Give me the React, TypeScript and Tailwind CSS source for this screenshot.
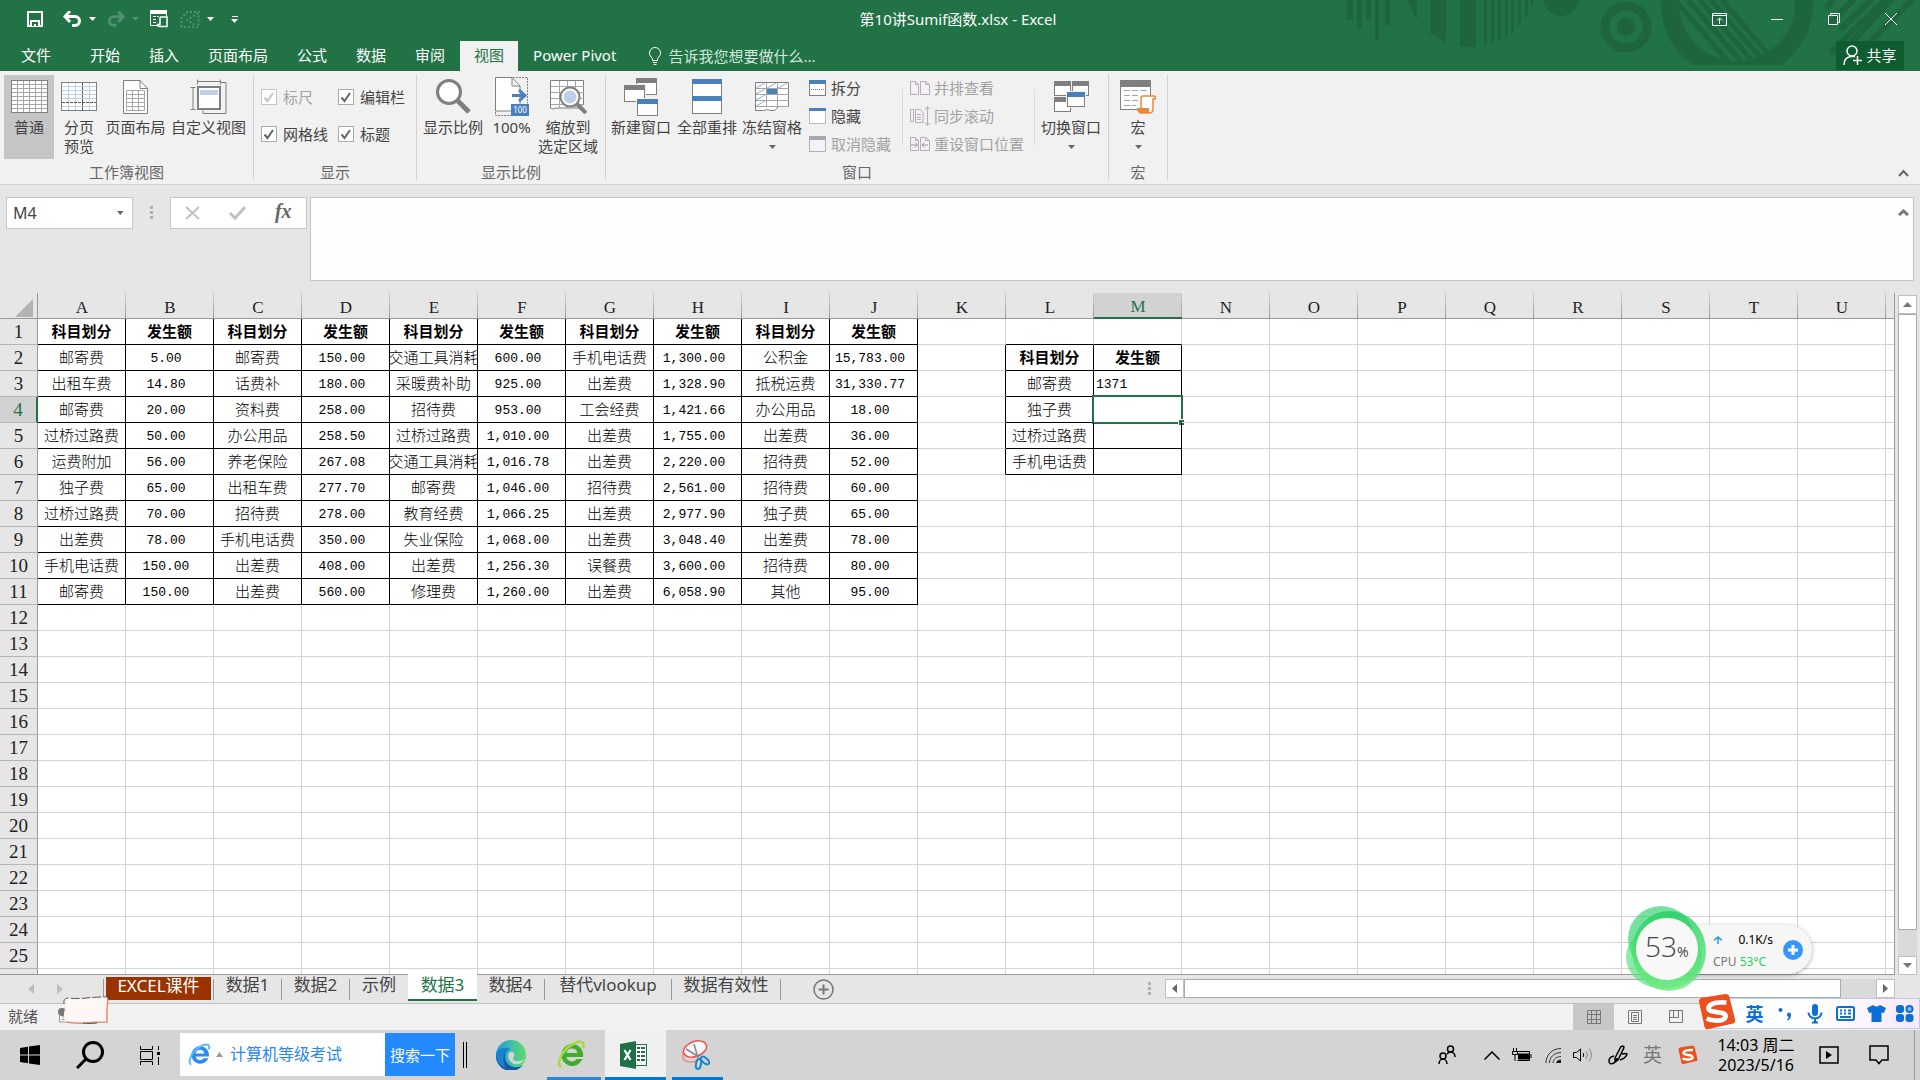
import { useState, type ReactNode } from 'react';

const GRAY = '#7f7f7f';
const BLUE = '#4a81bc';

/* ---------- sheet data ---------- */

const sheetRows: string[][] = [
  ['科目划分', '发生额', '科目划分', '发生额', '科目划分', '发生额', '科目划分', '发生额', '科目划分', '发生额'],
  ['邮寄费', '5.00', '邮寄费', '150.00', '交通工具消耗', '600.00', '手机电话费', '1,300.00', '公积金', '15,783.00'],
  ['出租车费', '14.80', '话费补', '180.00', '采暖费补助', '925.00', '出差费', '1,328.90', '抵税运费', '31,330.77'],
  ['邮寄费', '20.00', '资料费', '258.00', '招待费', '953.00', '工会经费', '1,421.66', '办公用品', '18.00'],
  ['过桥过路费', '50.00', '办公用品', '258.50', '过桥过路费', '1,010.00', '出差费', '1,755.00', '出差费', '36.00'],
  ['运费附加', '56.00', '养老保险', '267.08', '交通工具消耗', '1,016.78', '出差费', '2,220.00', '招待费', '52.00'],
  ['独子费', '65.00', '出租车费', '277.70', '邮寄费', '1,046.00', '招待费', '2,561.00', '招待费', '60.00'],
  ['过桥过路费', '70.00', '招待费', '278.00', '教育经费', '1,066.25', '出差费', '2,977.90', '独子费', '65.00'],
  ['出差费', '78.00', '手机电话费', '350.00', '失业保险', '1,068.00', '出差费', '3,048.40', '出差费', '78.00'],
  ['手机电话费', '150.00', '出差费', '408.00', '出差费', '1,256.30', '误餐费', '3,600.00', '招待费', '80.00'],
  ['邮寄费', '150.00', '出差费', '560.00', '修理费', '1,260.00', '出差费', '6,058.90', '其他', '95.00'],
];

const summary: Record<number, [string, string]> = {
  2: ['科目划分', '发生额'],
  3: ['邮寄费', '1371'],
  4: ['独子费', ''],
  5: ['过桥过路费', ''],
  6: ['手机电话费', ''],
};

const columns = 'ABCDEFGHIJKLMNOPQRSTU'.split('').concat('');
const rowNumbers = Array.from({ length: 26 }, (_, i) => i + 1);

function cellText(row: number, col: number) {
  if (col < 10) return sheetRows[row - 1]?.[col] ?? '';
  if (col === 11) return summary[row]?.[0] ?? '';
  if (col === 12) return summary[row]?.[1] ?? '';
  return '';
}

function cellBorder(row: number, col: number) {
  const inMain = row <= 11 && col <= 9;
  const inSummary = row >= 2 && row <= 6 && (col === 11 || col === 12);
  const right = inMain || inSummary || (row >= 2 && row <= 6 && col === 10);
  const bottom = inMain || inSummary || (row === 1 && (col === 11 || col === 12));
  return `${right ? 'border-r-black' : 'border-r-[#d4d4d4]'} ${bottom ? 'border-b-black' : 'border-b-[#d4d4d4]'}`;
}

/* ---------- small pieces ---------- */

function Caret({ color = '#666' }: { color?: string }) {
  return (
    <svg width="7" height="4" viewBox="0 0 7 4">
      <path d="M0 0h7L3.500 4z" fill={color} />
    </svg>
  );
}

function BigButton({ icon, lines, width, active, caret }: {
  icon: ReactNode;
  lines: string[];
  width: string;
  active?: boolean;
  caret?: boolean;
}) {
  return (
    <button className={`flex h-[84px] shrink-0 flex-col items-center whitespace-nowrap ${width} ${active ? 'bg-[#c5c5c5]' : ''}`}>
      <span className="flex h-[43px] items-center justify-center">{icon}</span>
      {lines.map((line) => (
        <span key={line} className="leading-[19px]">{line}</span>
      ))}
      {caret && <span className="flex h-[19px] items-center"><Caret /></span>}
    </button>
  );
}

function SmallButton({ icon, label, disabled }: { icon: ReactNode; label: string; disabled?: boolean }) {
  return (
    <button disabled={disabled} className="flex h-7 items-center gap-1 whitespace-nowrap pb-[2px] disabled:text-[#a3a3a3]">
      {icon}
      {label}
    </button>
  );
}

function Group({ label, width, children }: { label: string; width: string; children: ReactNode }) {
  return (
    <div className={`my-1 flex shrink-0 flex-col border-r border-[#d2d2d2] ${width}`}>
      <div className="flex flex-1">{children}</div>
      <div className="text-center leading-4 text-[#666]">{label}</div>
    </div>
  );
}

function CheckOption({ label, disabled }: { label: string; disabled?: boolean }) {
  return (
    <label className={`relative flex h-[37px] items-center gap-[6px] whitespace-nowrap ${disabled ? 'text-[#a3a3a3]' : ''}`}>
      <input
        type="checkbox"
        defaultChecked
        disabled={disabled}
        className="h-4 w-4 appearance-none border border-[#ababab] bg-white disabled:border-[#c6c6c6]"
      />
      <svg className="pointer-events-none absolute left-0" width="16" height="16" viewBox="0 0 16 16">
        <path d="M3.500 8.500l3 3.500 5.500-8" fill="none" stroke={disabled ? '#c6c6c6' : '#666'} strokeWidth="2" />
      </svg>
      {label}
    </label>
  );
}

/* ---------- ribbon icons ---------- */

function NormalIcon() {
  return (
    <svg width="37" height="33" viewBox="0 0 37 33">
      <rect x=".5" y=".5" width="36" height="32" fill="#fff" stroke={GRAY} />
      <path d="M6.500 1v31M12.500 1v31M18.500 1v31M24.500 1v31M30.500 1v31M1 4.500h35M1 8.500h35M1 12.500h35M1 16.500h35M1 20.500h35M1 24.500h35M1 28.500h35" stroke="#a6a6a6" />
    </svg>
  );
}

function PageBreakIcon() {
  return (
    <svg width="36" height="29" viewBox="0 0 36 29">
      <rect x=".5" y=".5" width="35" height="28" fill="#fff" stroke={GRAY} />
      <path d="M7.500 1v27M14.500 1v27M28.500 1v27M1 4.500h34M1 8.500h34M1 12.500h34M1 16.500h34M1 24.500h34" stroke="#bdd0e9" />
      <path d="M21.500 1v27M1 20.500h34" stroke="#555" strokeDasharray="3 1" />
    </svg>
  );
}

function PageLayoutIcon() {
  return (
    <svg width="25" height="34" viewBox="0 0 25 34">
      <path d="M.5.500H17l7.500 8v25H.5z" fill="#fff" stroke={GRAY} />
      <path d="M17 .5v8h7.500" fill="none" stroke={GRAY} />
      <path d="M3.500 10.500h18v20h-18zM9.500 10.500v20M15.500 10.500v20M3.500 14.500h18M3.500 18.500h18M3.500 22.500h18M3.500 26.500h18" fill="none" stroke="#a6a6a6" />
    </svg>
  );
}

function CustomViewIcon() {
  return (
    <svg width="37" height="36" viewBox="0 0 37 36">
      <path d="M30 3.500h6v31H13v-3M7.500.5v5M30.500.5v5M7.500 2.500h23M.5 8.500h5M3 8.500v22M.5 30.500h5" fill="none" stroke={GRAY} />
      <rect x="8" y="8" width="22" height="22" fill="#fff" stroke={GRAY} strokeWidth="2" />
      <rect x="10" y="11" width="18" height="5" fill="#bdd0e9" />
    </svg>
  );
}

function ZoomIcon() {
  return (
    <svg width="35" height="35" viewBox="0 0 35 35">
      <circle cx="13" cy="13" r="11.500" fill="#fff" stroke={GRAY} strokeWidth="3" />
      <path d="M21 21l12 12" stroke={GRAY} strokeWidth="5" />
    </svg>
  );
}

function Zoom100Icon() {
  return (
    <svg width="34" height="39" viewBox="0 0 34 39">
      <path d="M18 .5h14.500v26M.5 35v3.500H16" fill="none" stroke={GRAY} strokeDasharray="2 1" />
      <path d="M.5.500H17l8 8.500v25H.5z" fill="#fff" stroke={GRAY} />
      <path d="M17 .5V9h8" fill="none" stroke={GRAY} />
      <path d="M17 18.500h12M24 13l6 5.500-6 5.500" fill="none" stroke={BLUE} strokeWidth="3" />
      <rect x="16" y="27" width="18" height="12" fill={BLUE} />
      <text x="25" y="36" fontSize="8" textAnchor="middle" fill="#fff" fontFamily="Noto Sans, sans-serif">100</text>
    </svg>
  );
}

function ZoomSelectionIcon() {
  return (
    <svg width="37" height="34" viewBox="0 0 37 34">
      <path d="M.5.500h33v24L30 28H6l-3 1-2.500-1z" fill="#fff" stroke={GRAY} />
      <path d="M9.500 1v27M17.500 1v27M25.500 1v27M1 6.500h33M1 12.500h33M1 18.500h33M1 24.500h33" stroke="#a6a6a6" />
      <path d="M27 24l9 9" stroke={GRAY} strokeWidth="4" />
      <circle cx="20" cy="17" r="9.500" fill="#fff" stroke={GRAY} strokeWidth="2" />
      <circle cx="20" cy="17" r="6.500" fill="#bdd0e9" />
    </svg>
  );
}

function MiniWindow({ x, y, w, h, color }: { x: number; y: number; w: number; h: number; color: string }) {
  return (
    <g>
      <rect x={x - 1} y={y - 1} width={w + 2} height={h + 2} fill="#f1f1f1" />
      <rect x={x + 0.5} y={y + 0.5} width={w - 1} height={h - 1} fill="#fff" stroke={GRAY} />
      <rect x={x} y={y} width={w} height="5" fill={color} />
    </g>
  );
}

function NewWindowIcon() {
  return (
    <svg width="34" height="38" viewBox="0 0 34 38">
      <MiniWindow x={12} y={0} w={21} h={17} color={GRAY} />
      <MiniWindow x={0} y={7} w={21} h={17} color={GRAY} />
      <MiniWindow x={13} y={21} w={21} h={17} color={BLUE} />
    </svg>
  );
}

function ArrangeIcon() {
  return (
    <svg width="30" height="35" viewBox="0 0 30 35">
      <rect x=".5" y=".5" width="29" height="34" fill="#fff" stroke={GRAY} />
      <rect width="30" height="5" fill={BLUE} />
      <rect y="17" width="30" height="5" fill={BLUE} />
    </svg>
  );
}

function FreezeIcon() {
  return (
    <svg width="34" height="29" viewBox="0 0 34 29">
      <path d="M.5.500h33v24h-10l-4 4h-4l-3-1-4 1h-8z" fill="#fff" stroke={GRAY} />
      <path d="M11.500 1v24M22.500 1v24M1 6.500h33M1 12.500h33M1 18.500h33M1 24.500h33" stroke="#a6a6a6" />
      <path d="M1 6l9-5M12 6l9-5M23 6l9-5M1 12l9-5M1 18l9-5M1 24l9-5" stroke="#8fb0d8" />
      <rect x="12" y="7" width="10" height="5" fill={BLUE} />
    </svg>
  );
}

function SwitchIcon() {
  return (
    <svg width="35" height="32" viewBox="0 0 35 32">
      <MiniWindow x={0} y={0} w={17} h={15} color={GRAY} />
      <MiniWindow x={18} y={0} w={17} h={15} color={GRAY} />
      <MiniWindow x={0} y={16} w={17} h={15} color={GRAY} />
      <MiniWindow x={13} y={11} w={18} h={15} color={BLUE} />
    </svg>
  );
}

function MacroIcon() {
  return (
    <svg width="36" height="34" viewBox="0 0 36 34">
      <rect x=".5" y=".5" width="30" height="29" fill="#fff" stroke={GRAY} />
      <rect width="31" height="7" fill={GRAY} />
      <path d="M4 10.500h6M12 10.500h6M20 10.500h7M4 15.500h6M12 15.500h6M4 20.500h6M12 20.500h6M4 25.500h6M12 25.500h4" stroke="#a6a6a6" />
      <path d="M21 28V18q0-2 2-2h11q2 0 1 3h-2v10q0 4-4 4h-9" fill="#fff" stroke="#e8883a" strokeWidth="1.500" />
      <path d="M17 28h12v5H20q-3 0-3-5z" fill="#e8883a" />
    </svg>
  );
}

function PaneIcon({ kind }: { kind: 'split' | 'hide' | 'unhide' }) {
  const off = kind === 'unhide';
  return (
    <svg className="mr-px" width="17" height="16" viewBox="0 0 17 16">
      <rect x=".5" y=".5" width="16" height="15" fill={off ? '#f6f1f8' : '#fff'} stroke={off ? '#b5aeb8' : GRAY} strokeDasharray={kind === 'hide' ? '1 1' : undefined} />
      <rect width="17" height={kind === 'hide' ? 3 : 4} fill={off ? '#aaa6ac' : BLUE} />
      {kind === 'split' && <path d="M2 9.500h13" stroke={BLUE} strokeDasharray="1 1" />}
    </svg>
  );
}

function PairIcon({ kind }: { kind: 'side' | 'sync' | 'reset' }) {
  return (
    <svg width="20" height="20" viewBox="0 0 20 20" fill="#f6f1f8" stroke="#b5aeb8">
      {kind === 'sync' ? (
        <>
          <path d="M.5 3.500h3v12h-3zM5.500 3.500h5l2.500 3v10H5.500zM7 8.500h4M7 11.500h4M7 13.500h4" />
          <path d="M17.500 1v18M15 3.500l2.500-3 2.500 3M15 16.500l2.500 3 2.500-3" fill="none" />
        </>
      ) : (
        <>
          <path d="M.5 3.500h5l3 3v10h-8zM10.500 3.500h5l4 3v10h-9z" />
          <path d="M5.500 3.500v3h3M15.500 3.500v3h4" fill="none" />
          {kind === 'reset' && <path d="M1 11h6M5 8.500l2.500 2.500L5 13.500M18 11h-6M14.500 8.500L12 11l2.500 2.500" fill="none" stroke="#999" />}
        </>
      )}
    </svg>
  );
}

/* ---------- title bar ---------- */

function TitleArt() {
  return (
    <svg className="pointer-events-none absolute right-0 top-0" width="620" height="71" viewBox="0 0 620 71" fill="#1e653e">
      <defs>
        <clipPath id="disc"><circle cx="171" cy="-19" r="66" /></clipPath>
        <clipPath id="hole"><circle cx="437" cy="3" r="58" /></clipPath>
        <clipPath id="cut"><rect x="350" width="180" height="65" /></clipPath>
      </defs>
      <path d="M47 0h6v20h-6zM57 0h5v29h-5zM66 0h5v20h-5zM75 0h4v40h-4zM85 0h5v25h-5z" />
      <g clipPath="url(#disc)">
        <path d="M105 0h12v50h-12zM130 0h16v50h-16zM160 0h16v50h-16zM184 0h3v50h-3zM191 0h3v50h-3zM198 0h3v50h-3zM205 0h3v50h-3zM211 0h3v50h-3zM218 0h3v50h-3zM225 0h3v50h-3zM231 0h3v50h-3z" />
      </g>
      <circle cx="261" cy="-2" r="18" />
      <circle cx="326" cy="27" r="21" fill="none" stroke="#1e653e" strokeWidth="9" />
      <circle cx="326" cy="27" r="9" />
      <g clipPath="url(#cut)">
        <circle cx="437" cy="3" r="67" fill="none" stroke="#1e653e" strokeWidth="18" />
        <g clipPath="url(#hole)" stroke="#1e653e" strokeWidth="5">
          <path d="M375 0l60 70M388 0l60 70M400 0l60 70M411 0l60 70M422 0l60 70" />
        </g>
      </g>
      <g stroke="#1e653e" strokeWidth="6">
        <path d="M526 8l8-9M528 26l26-27M540 30l32-31M552 42l40-43M534 54l-2-3 54-52M560 52l54-54" fill="none" />
      </g>
    </svg>
  );
}

function QuickAccess() {
  return (
    <div className="flex items-center pl-[27px]">
      <button aria-label="保存">
        <svg width="16" height="16" viewBox="0 0 16 16">
          <path d="M1 1h14v14H1z" fill="none" stroke="#fff" strokeWidth="2" />
          <path d="M3 9h10v6H3z" fill="#fff" />
          <path d="M5 11h6v4H9v-2H7v2H5z" fill="#217346" />
        </svg>
      </button>
      <button aria-label="撤消" className="ml-5 flex items-center gap-[7px]">
        <svg width="19" height="16" viewBox="0 0 19 16" fill="none" stroke="#fff" strokeWidth="3">
          <path d="M2 5.500h10a4.500 4.500 0 010 9H9M7 0L2 5.500 7 11" />
        </svg>
        <Caret color="#fff" />
      </button>
      <button aria-label="恢复" disabled className="ml-[11px] flex items-center gap-[7px]">
        <svg width="18" height="16" viewBox="0 0 19 16" fill="none" stroke="#4f9170" strokeWidth="3">
          <path d="M17 5.500H7a4.500 4.500 0 000 9h3M12 0l5 5.500L12 11" />
        </svg>
        <Caret color="#4f9170" />
      </button>
      <button aria-label="记录单" className="ml-[11px]">
        <svg width="18" height="18" viewBox="0 0 18 18">
          <path d="M.5 1v14.500H8M.5.500h16V6" fill="none" stroke="#fff" />
          <path d="M0 0h17v4H0zM3 6h3v1H3zM3 9h3v1H3zM3 12h3v1H3zM7 6h2v1H7z" fill="#fff" />
          <path d="M10 7h7v9.500H8.500M10 7v7.500H7.500q0 2 2 2h5" fill="none" stroke="#fff" strokeWidth="1.500" />
        </svg>
      </button>
      <button aria-label="选择对象" className="ml-[12px] flex items-center gap-[7px]">
        <svg width="20" height="17" viewBox="0 0 20 17" fill="none" stroke="#4f9170">
          <path d="M1.500 16V7l6-6h11v15zM18 2L7 9l8 5" strokeDasharray="2 2" strokeWidth="2" />
        </svg>
        <Caret color="#fff" />
      </button>
      <button aria-label="自定义快速访问工具栏" className="ml-[14px] flex h-4 w-[13px] flex-col items-center justify-center gap-[2px]">
        <span className="h-px w-[6px] bg-white" />
        <Caret color="#fff" />
      </button>
    </div>
  );
}

function WindowButtons() {
  return (
    <div className="flex justify-end pr-px text-white">
      <button aria-label="功能区显示选项" className="flex w-[57px] items-center justify-center">
        <svg width="15" height="13" viewBox="0 0 15 13" fill="none" stroke="#fff">
          <path d="M.5.500h14v12H.5zM1 2.500h14M7.500 11V5M5 7.500L7.500 5 10 7.500" />
        </svg>
      </button>
      <button aria-label="最小化" className="flex w-[57px] items-center justify-center">
        <span className="h-px w-3 bg-white" />
      </button>
      <button aria-label="还原" className="flex w-[57px] items-center justify-center">
        <svg width="12" height="12" viewBox="0 0 12 12" fill="none" stroke="#fff">
          <path d="M.5 2.500h9v9h-9zM2.500 2V.5h9v9H10" />
        </svg>
      </button>
      <button aria-label="关闭" className="flex w-[57px] items-center justify-center">
        <svg width="12" height="12" viewBox="0 0 12 12" stroke="#fff"><path d="M0 0l12 12M12 0L0 12" /></svg>
      </button>
    </div>
  );
}

const ribbonTabs = ['文件', '开始', '插入', '页面布局', '公式', '数据', '审阅', '视图', 'Power Pivot'];

function Header() {
  const [tab, setTab] = useState('视图');
  return (
    <header className="relative shrink-0 bg-[#217346] text-white">
      <TitleArt />
      <div className="relative grid h-[41px] grid-cols-[1fr_auto_1fr] pb-[3px]">
        <QuickAccess />
        <h1 className="flex items-center pr-1">第10讲Sumif函数.xlsx - Excel</h1>
        <WindowButtons />
      </div>
      <nav className="relative flex h-[30px]">
        {ribbonTabs.map((name) => (
          <button
            key={name}
            onClick={() => setTab(name)}
            className={`mr-px whitespace-nowrap pb-[3px] ${name === '文件' ? 'w-[75px] pr-[3px]' : 'px-[14px]'} ${tab === name ? 'bg-[#f1f1f1] text-[#217346]' : ''}`}
          >
            {name}
          </button>
        ))}
        <label className="ml-[18px] flex items-center gap-[7px] pb-px text-[#d3e6da]">
          <svg width="12" height="18" viewBox="0 0 12 18" fill="none" stroke="#fff">
            <path d="M3.500 13.500v-2C1.500 9.500.5 8 .5 6a5.500 5.500 0 0111 0c0 2-1 3.500-3 5.500v2zM4 15.500h4M4.500 17.500h3" />
          </svg>
          <input placeholder="告诉我您想要做什么..." className="w-52 bg-transparent outline-none placeholder:text-[#d3e6da]" />
        </label>
        <button className="ml-auto mr-4 mb-px flex w-[68px] items-center justify-center gap-1 bg-[#0e5c2f] pb-[2px]">
          <svg width="19" height="20" viewBox="0 0 19 20" fill="none" stroke="#fff" strokeWidth="1.500">
            <circle cx="9" cy="6" r="5" />
            <path d="M1 20c0-5 3-8 7-8.500h4M14.500 11v9M10 15.500h9" />
          </svg>
          共享
        </button>
      </nav>
    </header>
  );
}

/* ---------- ribbon ---------- */

function Ribbon() {
  return (
    <section className="flex h-[114px] shrink-0 border-b border-[#d2d2d2] bg-[#f1f1f1] text-[#444]">
      <Group label="工作簿视图" width="w-[254px] px-1">
        <BigButton icon={<NormalIcon />} lines={['普通']} width="w-[50px]" active />
        <BigButton icon={<PageBreakIcon />} lines={['分页', '预览']} width="w-[50px]" />
        <BigButton icon={<PageLayoutIcon />} lines={['页面布局']} width="w-[63px]" />
        <BigButton icon={<CustomViewIcon />} lines={['自定义视图']} width="w-[83px]" />
      </Group>
      <Group label="显示" width="w-[163px]">
        <div className="grid grid-cols-[77px_auto] content-start pl-[7px] pt-[3px]">
          <CheckOption label="标尺" disabled />
          <CheckOption label="编辑栏" />
          <CheckOption label="网格线" />
          <CheckOption label="标题" />
        </div>
      </Group>
      <Group label="显示比例" width="w-[189px]">
        <BigButton icon={<ZoomIcon />} lines={['显示比例']} width="w-[72px]" />
        <BigButton icon={<Zoom100Icon />} lines={['100%']} width="w-[45px]" />
        <BigButton icon={<ZoomSelectionIcon />} lines={['缩放到', '选定区域']} width="w-[68px]" />
      </Group>
      <Group label="窗口" width="w-[503px]">
        <BigButton icon={<NewWindowIcon />} lines={['新建窗口']} width="w-[70px]" />
        <BigButton icon={<ArrangeIcon />} lines={['全部重排']} width="w-[62px]" />
        <BigButton icon={<FreezeIcon />} lines={['冻结窗格']} width="w-[68px]" caret />
        <div className="w-[96px] pl-[3px]">
          <SmallButton icon={<PaneIcon kind="split" />} label="拆分" />
          <SmallButton icon={<PaneIcon kind="hide" />} label="隐藏" />
          <SmallButton icon={<PaneIcon kind="unhide" />} label="取消隐藏" disabled />
        </div>
        <div className="mt-[14px] h-14 w-px bg-[#dcdcdc]" />
        <div className="w-[131px] pl-[7px]">
          <SmallButton icon={<PairIcon kind="side" />} label="并排查看" disabled />
          <SmallButton icon={<PairIcon kind="sync" />} label="同步滚动" disabled />
          <SmallButton icon={<PairIcon kind="reset" />} label="重设窗口位置" disabled />
        </div>
        <div className="mt-[14px] h-14 w-px bg-[#dcdcdc]" />
        <BigButton icon={<SwitchIcon />} lines={['切换窗口']} width="w-[72px]" caret />
      </Group>
      <Group label="宏" width="w-[59px]">
        <BigButton icon={<MacroIcon />} lines={['宏']} width="w-[58px]" caret />
      </Group>
      <button aria-label="折叠功能区" className="mb-[7px] ml-auto mr-[11px] self-end">
        <svg width="11" height="8" viewBox="0 0 11 8"><path d="M1 7l4.500-5L10 7" fill="none" stroke="#666" strokeWidth="2" /></svg>
      </button>
    </section>
  );
}

function FormulaBar() {
  return (
    <section className="flex h-[108px] shrink-0 items-start bg-[#e6e6e6] pl-[6px] pr-[6px] pt-3">
      <div className="flex h-8 w-[127px] items-center border border-[#c6c6c6] bg-white pr-2">
        <input aria-label="名称框" defaultValue="M4" className="w-full bg-transparent pl-[6px] text-base text-[#444] outline-none" />
        <Caret />
      </div>
      <Dots className="ml-[17px] mt-[9px]" />
      <div className="ml-[17px] flex h-8 w-[137px] items-center justify-around border border-[#c6c6c6] bg-white">
        <button aria-label="取消"><svg width="15" height="14" viewBox="0 0 15 14" stroke="#c0c0c0" strokeWidth="2"><path d="M1 1l13 12M14 1L1 13" /></svg></button>
        <button aria-label="输入"><svg width="17" height="14" viewBox="0 0 17 14" fill="none" stroke="#c0c0c0" strokeWidth="3"><path d="M1 7l5 5L16 1" /></svg></button>
        <button aria-label="插入函数" className="pb-1 font-['Liberation_Serif',serif] text-xl leading-6 font-bold text-[#666] italic">fx</button>
      </div>
      <div className="ml-[3px] flex h-[84px] flex-1 items-start border border-[#c6c6c6] bg-[#fdfdfd]">
        <textarea aria-label="编辑栏" className="h-full flex-1 resize-none bg-transparent px-2 outline-none" />
        <svg className="mr-1 mt-[10px]" width="11" height="8" viewBox="0 0 11 8"><path d="M1 7l4.500-4L10 7" fill="none" stroke="#777" strokeWidth="3" /></svg>
      </div>
    </section>
  );
}

function Dots({ className = '' }: { className?: string }) {
  return (
    <span className={`flex flex-col gap-[2px] ${className}`}>
      <i className="h-[3px] w-[3px] bg-[#b0b0b0]" />
      <i className="h-[3px] w-[3px] bg-[#b0b0b0]" />
      <i className="h-[3px] w-[3px] bg-[#b0b0b0]" />
    </span>
  );
}

/* ---------- sheet ---------- */

function Sheet() {
  return (
    <section className="flex min-h-0 flex-1 bg-[#e6e6e6]">
      <div className="min-w-0 flex-1 overflow-hidden border-r border-b border-[#999] bg-white">
        <table className="w-0 table-fixed border-separate border-spacing-0">
          <colgroup>
            <col className="w-[38px]" />
            {columns.map((_, i) => <col key={i} className="w-[88px]" />)}
          </colgroup>
          <thead className="font-['Liberation_Serif',serif] text-[17px] leading-[25px] text-[#222]">
            <tr className="h-[26px]">
              <th className="border-r border-b border-[#999] bg-[#e6e6e6] p-0">
                <svg className="ml-auto mr-1 mt-1" width="18" height="18" viewBox="0 0 18 18"><path d="M18 0v18H0z" fill="#b3b3b3" /></svg>
              </th>
              {columns.map((name, i) => (
                <th
                  key={i}
                  className={`bg-[linear-gradient(to_bottom,#d0d0d0,#999)] bg-[length:1px_100%] bg-right bg-no-repeat p-0 font-normal ${
                    name === 'M' ? 'border-b-2 border-[#217346] bg-[#d2d2d2] text-[#217346]' : 'border-b border-[#999] bg-[#e6e6e6]'
                  }`}
                >
                  <div className="h-6 pt-px">{name}</div>
                </th>
              ))}
            </tr>
          </thead>
          <tbody className="text-black">
            {rowNumbers.map((row) => (
              <tr key={row} className="h-[26px]">
                <th
                  className={`border-b border-[#b5b5b5] p-0 text-center font-['Liberation_Serif',serif] text-[19px] leading-[25px] font-normal ${
                    row === 4 ? 'border-r-2 border-r-[#217346] bg-[#d2d2d2] text-[#217346]' : 'border-r border-r-[#999] bg-[#e6e6e6] text-[#222]'
                  }`}
                >
                  {row < 26 ? row : ''}
                </th>
                {columns.map((_, col) => {
                  const text = cellText(row, col);
                  const numeric = /^[\d,]+\.\d\d$/.test(text);
                  const heading = (row === 1 && col < 10) || (row === 2 && col > 10);
                  const selected = row === 4 && col === 12;
                  return (
                    <td key={col} className={`relative border-r border-b p-0 ${cellBorder(row, col)}`}>
                      <div
                        className={`flex h-[25px] items-center overflow-hidden leading-[25px] whitespace-nowrap ${
                          numeric ? "justify-center pr-[7px] pt-px font-['Liberation_Mono',monospace] text-[13px]" : ''
                        } ${text === '1371' ? "pl-[2px] pt-px font-['Liberation_Mono',monospace] text-[13px]" : ''} ${
                          !numeric && text !== '1371' ? 'justify-center' : ''
                        } ${heading ? 'font-bold' : 'font-light'}`}
                      >
                        {text}
                      </div>
                      {selected && (
                        <div className="pointer-events-none absolute -inset-[2px] border-2 border-[#217346]">
                          <i className="absolute -right-[4px] -bottom-[4px] h-[7px] w-[7px] border border-white bg-[#217346]" />
                        </div>
                      )}
                    </td>
                  );
                })}
              </tr>
            ))}
          </tbody>
        </table>
      </div>
      <div className="flex w-[25px] shrink-0 flex-col pl-[3px] pr-[3px] pt-[2px]">
        <button aria-label="向上滚动" className="flex h-[19px] items-center justify-center border border-[#c0c0c0] bg-white">
          <svg width="9" height="5" viewBox="0 0 9 5"><path d="M0 5h9L4.500 0z" fill="#777" /></svg>
        </button>
        <div className="flex-1 bg-[#dadada]">
          <div className="h-[96%] border border-[#ababab] bg-white" />
        </div>
        <button aria-label="向下滚动" className="flex h-[19px] items-center justify-center border border-[#c0c0c0] bg-white">
          <svg width="9" height="5" viewBox="0 0 9 5"><path d="M0 0h9L4.500 5z" fill="#777" /></svg>
        </button>
      </div>
    </section>
  );
}

const sheetTabs = [
  { name: '数据1', width: 'w-[67px]' },
  { name: '数据2', width: 'w-[67px]' },
  { name: '示例', width: 'w-[58px]' },
  { name: '数据3', width: 'w-[69px]' },
  { name: '数据4', width: 'w-[67px]' },
  { name: '替代vlookup', width: 'w-[126px]' },
  { name: '数据有效性', width: 'w-[108px]' },
];

function SheetTabs() {
  const [active, setActive] = useState('数据3');
  return (
    <section className="flex h-7 shrink-0 bg-[#e6e6e6] text-[17px] leading-[22px] text-[#444]">
      <div className="flex w-[103px] items-center justify-start gap-[23px] pl-7">
        <svg width="6" height="10" viewBox="0 0 6 10"><path d="M6 0v10L0 5z" fill="#bdbdbd" /></svg>
        <svg width="6" height="10" viewBox="0 0 6 10"><path d="M0 0v10l6-5z" fill="#bdbdbd" /></svg>
      </div>
      <div className="mt-1 mr-[2px] h-[21px] w-px bg-[#999]" />
      <button className="mt-[2px] h-[23px] w-[105px] bg-[#993300] pb-[6px] leading-4 text-white">EXCEL课件</button>
      <div className="mt-1 ml-[2px] h-[21px] w-px bg-[#999]" />
      {sheetTabs.map(({ name, width }) => {
        const on = name === active;
        return (
          <div key={name} className="flex">
            <button
              onClick={() => setActive(name)}
              className={`whitespace-nowrap leading-5 ${width} ${
                on ? '-mt-px h-[27px] border-b-2 border-[#217346] bg-white pb-[4px] text-[#217346]' : 'h-[25px] pb-[5px]'
              }`}
            >
              {name}
            </button>
            {!on && name !== '示例' && <span className="mt-1 h-[21px] w-px bg-[#999]" />}
          </div>
        );
      })}
      <button aria-label="新工作表" className="ml-8 flex items-center">
        <svg width="21" height="21" viewBox="0 0 21 21" fill="none" stroke="#777">
          <circle cx="10.500" cy="10.500" r="9.500" strokeWidth="1.500" />
          <path d="M10.500 5.500v10M5.500 10.500h10" strokeWidth="2" />
        </svg>
      </button>
      <Dots className="ml-auto mr-[14px] mt-[7px]" />
      <div className="mr-[25px] flex w-[38%] items-start pt-1">
        <button aria-label="向左滚动" className="flex h-[19px] w-[19px] items-center justify-center border border-[#c0c0c0] bg-white">
          <svg width="5" height="9" viewBox="0 0 5 9"><path d="M5 0v9L0 4.500z" fill="#666" /></svg>
        </button>
        <div className="h-[19px] flex-1 bg-[#dadada]">
          <div className="h-full w-[95%] border border-[#ababab] bg-white" />
        </div>
        <button aria-label="向右滚动" className="flex h-[19px] w-[19px] items-center justify-center border border-[#c0c0c0] bg-white">
          <svg width="5" height="9" viewBox="0 0 5 9"><path d="M0 0v9l5-4.500z" fill="#666" /></svg>
        </button>
      </div>
    </section>
  );
}

function StatusBar() {
  return (
    <section className="relative flex h-[27px] shrink-0 items-stretch border-t border-[#c0c0c0] bg-[#f1f1f1] pl-2 text-[#555]">
      <span className="leading-6">就绪</span>
      <svg className="absolute left-[57px] -top-[9px]" width="54" height="30" viewBox="0 0 54 30">
        <circle cx="5" cy="17" r="4" fill="#777" />
        <path d="M2.500 19v8h9M5 22h3M5 24.500h3" fill="none" stroke="#999" />
        <path d="M7 4q1-2 4-2 9 2 18 1t21-1l1 5-1 8v12q-9 1-20 1t-22-1q-2-8 0-13t-1-10z" fill="#fff7f6" />
        <path d="M7 9q-1-6 4-6 9 1 18 0t20-1" fill="none" stroke="#555" strokeDasharray="9 2" />
        <path d="M51 4l-1 10v13q-12 0-20 1T9 27" fill="none" stroke="#e88a6c" strokeWidth="1.500" />
        <path d="M26 28q8 1 14 0" stroke="#555" fill="none" />
      </svg>
      <div className="ml-auto mr-[224px] flex">
        <button aria-label="普通" className="flex w-[41px] items-center justify-center bg-[#c8c8c8]">
          <svg width="14" height="14" viewBox="0 0 14 14" fill="none" stroke="#777"><path d="M.5.500h13v13H.5zM4.500 0v14M9.500 0v14M0 4.500h14M0 9.500h14" /></svg>
        </button>
        <button aria-label="页面布局" className="flex w-[41px] items-center justify-center">
          <svg width="14" height="14" viewBox="0 0 14 14" fill="none" stroke="#777"><path d="M.5.500h13v13H.5zM3.500 2.500h7v9h-7zM5 5.500h4M5 7.500h4M5 9.500h4" /></svg>
        </button>
        <button aria-label="分页预览" className="flex w-[41px] items-center justify-center">
          <svg width="14" height="14" viewBox="0 0 14 14" fill="none" stroke="#777"><path d="M.5.500h13v12H.5zM4.500 0v7.500h5V0M0 7.500h5" /></svg>
        </button>
      </div>
    </section>
  );
}

/* ---------- floating tools ---------- */

function SogouLogo({ size }: { size: number }) {
  return (
    <svg width={size} height={size} viewBox="0 0 40 38">
      <path d="M1 8q0-3 3-4L29 0q3 0 4 3l6 24q1 3-2 4L11 37q-3 1-4-2z" fill="#ee4f1c" />
      <path d="M30 9Q12 8 11 15c0 6 19 2 18 9-1 5-13 5-20 2" fill="none" stroke="#fff" strokeWidth="5" />
    </svg>
  );
}

function SogouBar() {
  return (
    <div className="absolute right-0 bottom-[51px] flex h-[31px] items-center border border-[#b9cfe6] bg-gradient-to-r from-white via-white to-[#f6e9fa] pl-[29px] text-[#0b6fd6]">
      <div className="absolute -left-[12px] -top-[6px]"><SogouLogo size={38} /></div>
      <button className="w-[31px] text-lg font-bold">英</button>
      <button aria-label="标点" className="flex w-[30px] justify-center">
        <svg width="14" height="14" viewBox="0 0 14 14" fill="#0b6fd6"><circle cx="2.500" cy="3" r="2" /><path d="M9 7.500a2 2 0 114 0c0 3-1 5-3.500 6l-.5-1c1-.6 1.500-1.500 1.500-2.800A2 2 0 019 7.500z" /></svg>
      </button>
      <button aria-label="语音" className="flex w-[30px] justify-center">
        <svg width="16" height="20" viewBox="0 0 16 20" fill="#0b6fd6"><rect x="5" width="6" height="12" rx="3" /><path d="M1.500 8.500a6.500 6 0 0013 0M8 14v4M5 18.500h6" fill="none" stroke="#0b6fd6" strokeWidth="2" /></svg>
      </button>
      <button aria-label="软键盘" className="flex w-[31px] justify-center">
        <svg width="19" height="15" viewBox="0 0 19 15" fill="none" stroke="#0b6fd6" strokeWidth="2"><rect x="1" y="1" width="17" height="13" rx="1.500" /><path d="M4 4.500h2M8 4.500h2M12 4.500h3M4 7.500h2M8 7.500h2M12 7.500h3M4 11h11" /></svg>
      </button>
      <button aria-label="皮肤" className="flex w-[30px] justify-center">
        <svg width="19" height="17" viewBox="0 0 19 17" fill="#0b6fd6"><path d="M6 0q3.500 3 7 0l6 3-2 5-2.500-.5V17h-10V7.500L2 8 0 3z" /></svg>
      </button>
      <button aria-label="工具箱" className="flex w-[28px] justify-center">
        <svg width="18" height="17" viewBox="0 0 18 17" fill="#0b6fd6"><rect width="8" height="8" rx="3" /><circle cx="13.500" cy="4" r="3" fill="#8ec0f2" stroke="#0b6fd6" strokeWidth="2" /><rect y="9" width="8" height="8" rx="3" /><rect x="9.500" y="9" width="8" height="8" rx="3" /></svg>
      </button>
    </div>
  );
}

function SpeedBall() {
  return (
    <div className="absolute right-[107px] bottom-[87px] flex h-[88px] w-[187px] items-center">
      <div className="absolute right-px top-[20px] flex h-[49px] w-[130px] items-center rounded-r-full bg-[#f6f6f6] shadow-[0_1px_4px_rgba(0,0,0,0.3)]">
        <div className="ml-[31px] flex-1 text-xs">
          <div className="flex items-center justify-between pr-px leading-6 text-black">
            <svg className="ml-px" width="8" height="8" viewBox="0 0 8 8" fill="none" stroke="#2f93f5" strokeWidth="1.500"><path d="M4 8V1M0 4.500L4 1l4 3.500" /></svg>
            0.1K/s
          </div>
          <div className="whitespace-nowrap leading-5 text-[#777]">CPU <span className="text-[#1fd164]">53°C</span></div>
        </div>
        <button aria-label="加速" className="mr-[9px] ml-[9px]">
          <svg width="20" height="20" viewBox="0 0 20 20"><circle cx="10" cy="10" r="10" fill="#3296fa" /><path d="M10 5v10M5 10h10" stroke="#fff" strokeWidth="3" /></svg>
        </button>
      </div>
      <svg className="absolute left-0 top-0" width="84" height="88" viewBox="0 0 84 88">
        <defs>
          <linearGradient id="ball" x1="0" y1="0" x2="0" y2="1">
            <stop offset="0" stopColor="#25cf63" />
            <stop offset="1" stopColor="#6cec7c" />
          </linearGradient>
        </defs>
        <circle cx="35" cy="34" r="33" fill="#2ccf6b" opacity=".65" />
        <ellipse cx="38" cy="52" rx="38" ry="32" fill="#4fe07a" opacity=".65" />
        <ellipse cx="43" cy="46" rx="37" ry="40" fill="url(#ball)" opacity=".8" />
        <circle cx="41" cy="44" r="31" fill="#f8f8f8" />
      </svg>
      <span className="relative ml-[19px] font-['Open_Sans','Noto_Sans',sans-serif] text-[28px] font-light text-[#444]">
        53<span className="text-sm font-normal">%</span>
      </span>
    </div>
  );
}

/* ---------- taskbar ---------- */

function IeIcon({ from, to, size }: { from: string; to: string; size: string }) {
  return (
    <svg className={size} viewBox="0 0 30 30">
      <path d="M15 4a11 11 0 1010.500 15h-6A5.500 5.500 0 019.500 17H26A11 11 0 0015 4zM9.600 13a5.500 5.500 0 0110.800 0z" fill={from} fillRule="evenodd" />
      <path d="M4 27C-2 24 6 8 18 3c7-3 10 0 8 5" fill="none" stroke={to} strokeWidth="2.500" />
    </svg>
  );
}

function Taskbar() {
  return (
    <footer className="flex h-[50px] shrink-0 items-stretch bg-[#d4d4d4] text-black">
      <button aria-label="开始" className="flex w-[60px] items-center justify-center">
        <svg width="20" height="20" viewBox="0 0 20 20"><path d="M0 3l8-1.200v7.700H0zM9 1.600L20 0v9.500H9zM0 10.500h8v7.700L0 17zM9 10.500h11V20L9 18.400z" /></svg>
      </button>
      <button aria-label="搜索" className="flex w-[60px] items-center justify-center">
        <svg width="28" height="28" viewBox="0 0 28 28" fill="none" stroke="#000" strokeWidth="3"><circle cx="17" cy="11" r="9.500" /><path d="M10.500 17.500L1 27" /></svg>
      </button>
      <button aria-label="任务视图" className="flex w-[60px] items-center justify-center">
        <svg width="20" height="19" viewBox="0 0 20 19" fill="none" stroke="#000"><path d="M.5 0v3.500h12V0M.5 19v-3.500h12V19M.5 5.500h12v8H.5zM18.500 0v4M18.500 11v8" /><path d="M17 6h3v3h-3z" fill="#000" stroke="none" /></svg>
      </button>
      <form className="my-[3px] mb-1 flex w-[275px] bg-white" onSubmit={(e) => e.preventDefault()}>
        <span className="flex items-center gap-1 pl-2">
          <IeIcon from="#2b8cf5" to="#5db8f7" size="h-6 w-6" />
          <svg width="7" height="5" viewBox="0 0 7 5"><path d="M0 5h7L3.500 0z" fill="#999" /></svg>
        </span>
        <input aria-label="搜索内容" defaultValue="计算机等级考试" className="min-w-0 flex-1 pb-[2px] pl-[7px] text-base text-[#2a86f5] outline-none" />
        <button className="w-[70px] bg-[#2289ff] text-white">搜索一下</button>
      </form>
      <div className="my-3 ml-2 w-1 border-x border-black" />
      <button aria-label="Edge" className="ml-[14px] flex w-[60px] items-center justify-center">
        <svg width="30" height="30" viewBox="0 0 30 30">
          <defs>
            <linearGradient id="edgeTop" x1="0" x2="1"><stop offset="0" stopColor="#1d9fe0" /><stop offset="1" stopColor="#5fdc6a" /></linearGradient>
          </defs>
          <circle cx="15" cy="15" r="15" fill="url(#edgeTop)" />
          <path d="M0 15C2 8 9 7 14 9c-6 2-7 11-1 16 4 3 10 3 14 0a15 15 0 01-27-10z" fill="#1257a8" />
          <path d="M0 15c0-6 8-9 14-6-6 2-9 10-4 19.500A15 15 0 010 15z" fill="#1a80d0" />
          <path d="M14 12c4-1 6 3 3 6 0 4 7 4 12 1-3 4-6 6-10 5-6-1-9-9-5-12z" fill="#d4d4d4" />
        </svg>
      </button>
      <button aria-label="360浏览器" className="ml-[6px] mr-px flex w-[54px] items-center justify-center border-b-[3px] border-[#2a87d5] pr-1 pt-[3px]">
        <IeIcon from="#3fae2a" to="#a6dc3c" size="h-[30px] w-[30px]" />
      </button>
      <button aria-label="Excel" className="ml-[3px] flex w-[61px] items-center justify-center border-b-[3px] border-[#0078d7] bg-[#f0f0f0] pr-1 pt-[3px]">
        <svg width="27" height="28" viewBox="0 0 27 28">
          <rect x="14" y="3.500" width="12.500" height="21" fill="#fff" stroke="#1f7145" />
          <path d="M17 7h3M17 11h3M17 15h3M17 19h3M21 7h4M21 11h4M21 15h4M21 19h4" stroke="#1f7145" strokeWidth="2" />
          <path d="M0 3l16-3v28L0 25z" fill="#1f7145" />
          <path d="M4.500 9l6 10M10.500 9l-6 10" stroke="#fff" strokeWidth="2.200" />
        </svg>
      </button>
      <button aria-label="截图工具" className="ml-[6px] flex w-[51px] items-center justify-center border-b-[3px] border-[#0078d7] pr-1 pt-[3px]">
        <svg width="28" height="30" viewBox="0 0 28 30" fill="none">
          <path d="M1 12v6c1 4 8 5 13 3" stroke="#e88" strokeWidth="1.500" />
          <ellipse cx="13" cy="9" rx="12" ry="7.500" transform="rotate(-20 13 9)" fill="#f7f7f7" stroke="#e9524f" strokeWidth="1.500" />
          <path d="M4 9l13 8M12 4l4 14" stroke="#888" strokeWidth="1.500" />
          <ellipse cx="16.500" cy="24" rx="2.500" ry="5" transform="rotate(12 16.500 24)" stroke="#1787cf" strokeWidth="2" />
          <ellipse cx="23" cy="20.500" rx="2.500" ry="5" transform="rotate(-50 23 20.500)" stroke="#1787cf" strokeWidth="2" />
        </svg>
      </button>

      <div className="ml-auto flex items-center">
        <svg className="mr-7" width="18" height="20" viewBox="0 0 18 20" fill="none" stroke="#000" strokeWidth="1.500"><circle cx="12.500" cy="4" r="3" /><circle cx="5" cy="11" r="3" /><path d="M1 19c0-3 2-5 4-5s4 2 4 5M9 9c1-1.500 2.500-2 3.500-2 2.500 0 4.500 2 4.500 5" /></svg>
        <svg className="mr-3" width="16" height="9" viewBox="0 0 16 9" fill="none" stroke="#000" strokeWidth="1.500"><path d="M.5 8.500L8 1l7.500 7.500" /></svg>
        <svg className="mr-[13px]" width="20" height="14" viewBox="0 0 20 14"><path d="M6 5.500h11v6H6z" fill="#000" /><path d="M4.500 3.500h13v9h-12M19 6v4M1.500 0v3M4.500 0v3M.5 3.500h5v3h-5zM3 6v7" fill="none" stroke="#000" /></svg>
        <svg className="mr-[12px]" width="16" height="16" viewBox="0 0 16 16" fill="none" stroke="#333"><path d="M1 16C1 8 7 1.500 16 1.500M4.500 16c0-6 5-10.500 11.500-10.500M8 16c0-4 4-6.500 8-6.500" /><path d="M11.500 16c0-2 2-3 4.500-3v3z" fill="#000" /></svg>
        <svg className="mr-[15px]" width="20" height="16" viewBox="0 0 20 16" fill="none" stroke="#000"><path d="M.5 5.500h3L7.500 2v12l-4-3.500h-3z" /><path d="M10 6q1.500 2 0 4" /><path d="M13 4q3 4 0 8M16 1.500q5 6.500 0 13" stroke="#888" /></svg>
        <svg className="mr-[15px]" width="20" height="20" viewBox="0 0 20 20" fill="none" stroke="#000" strokeWidth="1.500"><path d="M7 13L13 1.500q3-1 3 1L10 15l-3 2zM6 11q-5 1-5 5 0 4 5 2 3-2 3-5M14 9q4-1 5 0-1 4-7 6" /></svg>
        <span className="mr-4 text-[19px] text-[#777]">英</span>
        <span className="mr-[18px]"><SogouLogo size={20} /></span>
        <time className="mr-[23px] w-[80px] text-center text-base leading-5 whitespace-nowrap">
          <span className="block">14:03 周二</span>
          <span className="block">2023/5/16</span>
        </time>
        <svg className="mr-[30px]" width="20" height="18" viewBox="0 0 20 18" fill="none" stroke="#000" strokeWidth="1.500"><path d="M1 1h18v16H1z" /><path d="M7 5l6 4-6 4z" fill="#000" stroke="none" /></svg>
        <svg className="mr-[25px]" width="20" height="20" viewBox="0 0 20 20" fill="none" stroke="#000" strokeWidth="1.500"><path d="M1 1h18v14h-6l-3 3.500L7 15H1z" /></svg>
        <div className="mr-[5px] h-[50px] w-px bg-[#999]" />
      </div>
    </footer>
  );
}

export default function App() {
  return (
    <div className="relative flex h-screen flex-col overflow-hidden bg-[#e6e6e6] font-['Noto_Sans','Noto_Sans_CJK_SC',sans-serif] text-[15px] leading-5">
      <Header />
      <Ribbon />
      <FormulaBar />
      <Sheet />
      <SheetTabs />
      <StatusBar />
      <Taskbar />
      <SpeedBall />
      <SogouBar />
    </div>
  );
}
